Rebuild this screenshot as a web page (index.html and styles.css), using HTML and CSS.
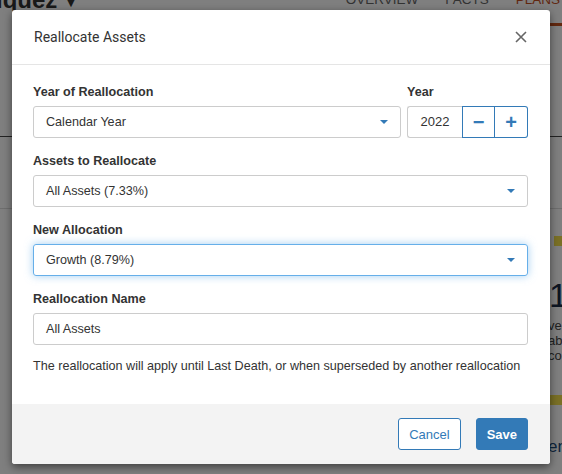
FILE: index.html
```html
<!DOCTYPE html>
<html lang="en">
<head>
<meta charset="UTF-8">
<meta name="viewport" content="width=device-width, initial-scale=1.0">
<title>Reallocate Assets</title>
<link rel="stylesheet" href="styles.css">
</head>
<body>

<div class="page">
  <div class="topbar">
    <div class="client">iquez <span class="client-caret">&#9660;</span></div>
    <nav class="tabs">
      <span class="tab">OVERVIEW</span>
      <span class="tab">FACTS</span>
      <span class="tab active">PLANS</span>
    </nav>
  </div>
  <div class="subbar"></div>
  <div class="content">
    <div class="side">
      <div class="side-bar"></div>
      <div class="side-num">1</div>
      <div class="side-text">ve<br>ab<br>co</div>
      <div class="side-bar second"></div>
      <div class="side-link">en</div>
    </div>
  </div>
</div>

<div class="backdrop"></div>

<div class="modal">
  <div class="modal-header">
    <h4 class="modal-title">Reallocate Assets</h4>
    <svg class="close" width="12" height="12" viewBox="0 0 12 12">
      <path d="M1 1 L11 11 M11 1 L1 11" stroke="#666" stroke-width="1.6" fill="none"/>
    </svg>
  </div>
  <div class="modal-body">
    <div class="row">
      <div class="field grow">
        <label>Year of Reallocation</label>
        <div class="select">Calendar Year<span class="caret"></span></div>
      </div>
      <div class="field">
        <label>Year</label>
        <div class="stepper">
          <div class="stepper-value">2022</div>
          <button class="stepper-btn">&minus;</button>
          <button class="stepper-btn">+</button>
        </div>
      </div>
    </div>
    <div class="field">
      <label>Assets to Reallocate</label>
      <div class="select">All Assets (7.33%)<span class="caret"></span></div>
    </div>
    <div class="field">
      <label>New Allocation</label>
      <div class="select focused">Growth (8.79%)<span class="caret"></span></div>
    </div>
    <div class="field">
      <label>Reallocation Name</label>
      <div class="select">All Assets</div>
    </div>
    <p class="help">The reallocation will apply until Last Death, or when superseded by another reallocation</p>
  </div>
  <div class="modal-footer">
    <button class="btn btn-default">Cancel</button>
    <button class="btn btn-primary">Save</button>
  </div>
</div>

</body>
</html>
```

FILE: styles.css
```css
body {
  margin: 0;
  width: 562px;
  height: 474px;
  overflow: hidden;
  font-family: "Liberation Sans", Arial, sans-serif;
  background-color: #fff;
  color: #333;
  position: relative;
}

/* page behind the dialog */
.page {
  width: 562px;
  overflow: hidden;
}

.topbar {
  display: flex;
  justify-content: space-between;
  height: 150px;
  margin-top: -14px;
  border-bottom: 1px solid #444;
}

.client {
  font-size: 24px;
  font-weight: bold;
  color: #333;
  margin-left: -4px;
  line-height: 28px;
}

.client-caret {
  font-size: 14px;
  vertical-align: middle;
}

.tabs {
  display: flex;
  gap: 27px;
  margin-right: -12px;
}

.tab {
  font-size: 13.5px;
  color: #666;
  line-height: 28px;
  height: 37px;
  border-bottom: 3px solid transparent;
}

.tab.active {
  color: #c4501f;
  border-bottom-color: #c4501f;
  padding-right: 14px;
}

.subbar {
  height: 71px;
  border-bottom: 1px solid #ddd;
}

.content {
  display: flex;
  justify-content: flex-end;
}

.side {
  width: 14px;
  overflow: hidden;
  padding-top: 27px;
}

.side-bar {
  height: 10px;
  background: #f4e04d;
  margin-left: 6px;
  width: 40px;
}

.side-bar.second {
  margin-top: 32px;
  margin-left: 0;
}

.side-num {
  font-size: 34px;
  color: #1a2a44;
  margin-top: 32px;
  margin-left: 1px;
  line-height: 34px;
}

.side-text {
  font-size: 13px;
  line-height: 15px;
  color: #444;
  margin-top: 6px;
  white-space: nowrap;
}

.side-link {
  font-size: 17px;
  color: #1a4a7a;
  margin-top: 32px;
}

.backdrop {
  position: absolute;
  top: 0;
  left: 0;
  right: 0;
  bottom: 0;
  background: rgba(0,0,0,0.5);
}

/* dialog */
.modal {
  position: absolute;
  top: 10px;
  left: 12px;
  width: 538px;
  background: #fff;
  border-radius: 3px;
  box-shadow: 0 3px 9px rgba(0,0,0,0.5);
}

.modal-header {
  display: flex;
  justify-content: space-between;
  align-items: center;
  height: 54px;
  padding: 0 22px 0 22px;
  border-bottom: 1px solid #e5e5e5;
}

.modal-title {
  margin: 0;
  font-family: Roboto, "Liberation Sans", sans-serif;
  font-weight: normal;
  font-size: 14px;
  color: #333;
}

.close {
  display: block;
  margin-right: 1px;
}

.modal-body {
  padding: 18px 22px 31px 21px;
}

.row {
  display: flex;
  gap: 6px;
}

.grow {
  flex: 1;
}

.field {
  margin-bottom: 14px;
}

.field label {
  display: block;
  font-size: 12.6px;
  font-weight: bold;
  line-height: 18px;
  margin-bottom: 5px;
}

.select {
  position: relative;
  height: 30px;
  line-height: 30px;
  padding: 0 12px;
  border: 1px solid #ccc;
  border-radius: 3px;
  font-size: 12.6px;
  color: #333;
}

.select.focused {
  border-color: #66afe9;
  box-shadow: 0 0 8px rgba(102,175,233,0.6);
}

.caret {
  position: absolute;
  right: 12px;
  top: 13px;
  border-left: 4px solid transparent;
  border-right: 4px solid transparent;
  border-top: 4px solid #337ab7;
}

.stepper {
  display: flex;
  height: 32px;
}

.stepper-value {
  width: 55px;
  box-sizing: border-box;
  height: 32px;
  line-height: 30px;
  border: 1px solid #ccc;
  border-right: none;
  border-radius: 3px 0 0 3px;
  text-align: center;
  font-size: 13px;
}

.stepper-btn {
  width: 33px;
  height: 32px;
  background: #fff;
  border: 1px solid #337ab7;
  color: #337ab7;
  font-size: 20px;
  font-weight: bold;
  font-family: "Liberation Sans", sans-serif;
  padding: 0;
  line-height: 1;
}

.stepper-btn + .stepper-btn {
  border-left: none;
  border-radius: 0 3px 3px 0;
}

.help {
  margin: 0;
  font-size: 12.6px;
  line-height: 14px;
  white-space: nowrap;
}

.modal-footer {
  display: flex;
  justify-content: flex-end;
  gap: 15px;
  padding: 14px 22px;
  background: #f3f3f3;
  border-radius: 0 0 3px 3px;
}

.btn {
  height: 32px;
  padding: 0 10px;
  font-size: 13px;
  font-family: "Liberation Sans", sans-serif;
  border-radius: 3px;
  border: 1px solid #337ab7;
}

.btn-default {
  background: #fff;
  color: #337ab7;
}

.btn-primary {
  background: #337ab7;
  color: #fff;
  font-weight: bold;
}
```
